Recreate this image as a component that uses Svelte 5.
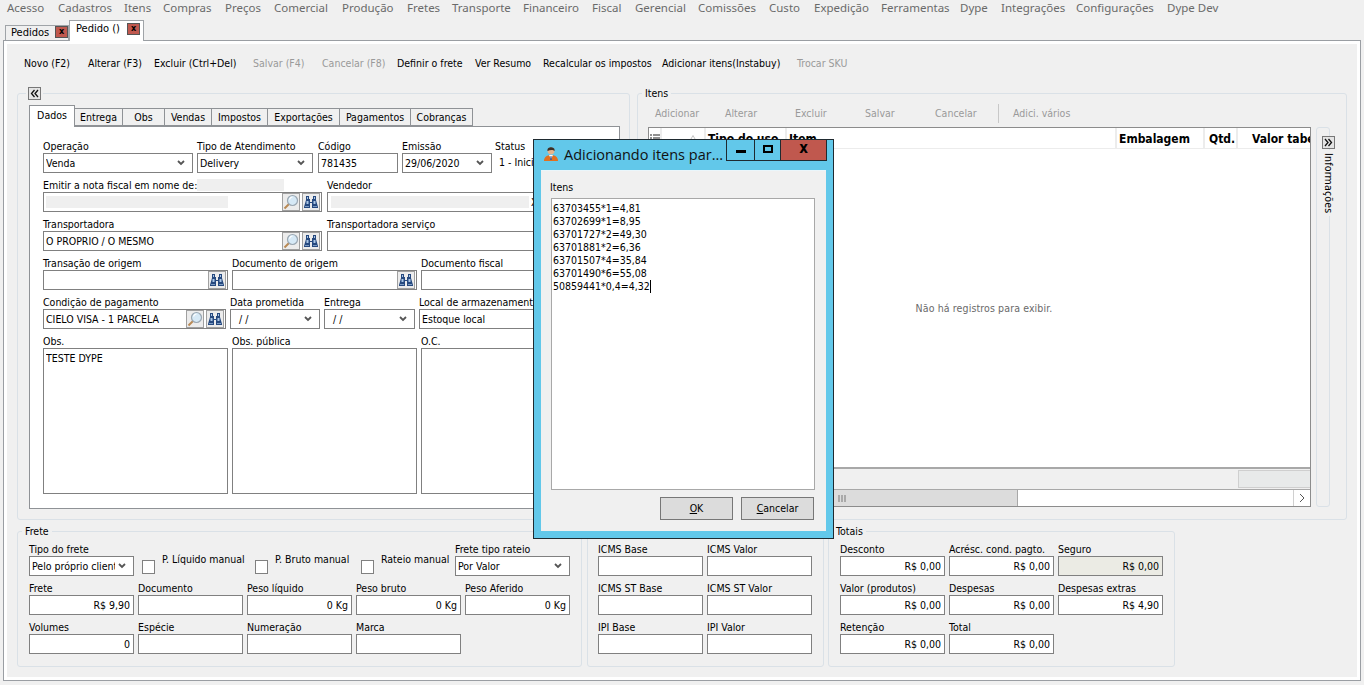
<script>
	const menu = ['Acesso', 'Cadastros', 'Itens', 'Compras', 'Preços', 'Comercial', 'Produção', 'Fretes', 'Transporte', 'Financeiro', 'Fiscal', 'Gerencial', 'Comissões', 'Custo', 'Expedição', 'Ferramentas', 'Dype', 'Integrações', 'Configurações', 'Dype Dev'];
	const menuX = [7, 58, 124, 163, 225, 274, 342, 407, 452, 523, 592, 635, 698, 769, 814, 881, 960, 1001, 1076, 1167, 1230];

	const toolbar = [
		{ text: 'Novo (F2)', w: 64 },
		{ text: 'Alterar (F3)', w: 66 },
		{ text: 'Excluir (Ctrl+Del)', w: 99 },
		{ text: 'Salvar (F4)', w: 69, off: true },
		{ text: 'Cancelar (F8)', w: 75, off: true },
		{ text: 'Definir o frete', w: 78 },
		{ text: 'Ver Resumo', w: 68 },
		{ text: 'Recalcular os impostos', w: 119 },
		{ text: 'Adicionar itens(Instabuy)', w: 135 },
		{ text: 'Trocar SKU', w: 70, off: true }
	];

	const pageTabs = [
		{ text: 'Entrega', w: 48 },
		{ text: 'Obs', w: 42 },
		{ text: 'Vendas', w: 47 },
		{ text: 'Impostos', w: 56 },
		{ text: 'Exportações', w: 72 },
		{ text: 'Pagamentos', w: 71 },
		{ text: 'Cobranças', w: 62 }
	];

	const dados = [
		[
			{ label: 'Operação', x: 43, w: 150, kind: 'select', value: 'Venda' },
			{ label: 'Tipo de Atendimento', x: 197, w: 116, kind: 'select', value: 'Delivery' },
			{ label: 'Código', x: 318, w: 80, value: '781435' },
			{ label: 'Emissão', x: 402, w: 90, kind: 'select', value: '29/06/2020' },
			{ label: 'Status', x: 495, w: 70, kind: 'plain', value: '1 - Inicial' }
		],
		[
			{ label: 'Emitir a nota fiscal em nome de:', x: 43, w: 279, kind: 'lookup', redacted: true, labelBlock: true },
			{ label: 'Vendedor', x: 327, w: 270, kind: 'masked' }
		],
		[
			{ label: 'Transportadora', x: 43, w: 279, kind: 'lookup', value: 'O PROPRIO / O MESMO' },
			{ label: 'Transportadora serviço', x: 327, w: 270 }
		],
		[
			{ label: 'Transação de origem', x: 43, w: 185, kind: 'find' },
			{ label: 'Documento de origem', x: 232, w: 185, kind: 'find' },
			{ label: 'Documento fiscal', x: 421, w: 176 }
		],
		[
			{ label: 'Condição de pagamento', x: 43, w: 183, kind: 'lookup', value: 'CIELO VISA - 1 PARCELA' },
			{ label: 'Data prometida', x: 230, w: 90, kind: 'select', value: '\u00a0\u00a0/\u00a0/' },
			{ label: 'Entrega', x: 324, w: 91, kind: 'select', value: '\u00a0\u00a0/\u00a0/' },
			{ label: 'Local de armazenamento', x: 419, w: 178, value: 'Estoque local' }
		],
		[
			{ label: 'Obs.', x: 43, w: 185, h: 146, value: 'TESTE DYPE', multi: true },
			{ label: 'Obs. pública', x: 232, w: 185, h: 146 },
			{ label: 'O.C.', x: 421, w: 176, h: 146 }
		]
	];

	const frete = [
		[
			{ label: 'Tipo do frete', x: 29, w: 105, kind: 'select', value: 'Pelo próprio client' },
			{ label: 'P. Líquido manual', x: 142, w: 108, kind: 'check' },
			{ label: 'P. Bruto manual', x: 255, w: 100, kind: 'check', pad: 7 },
			{ label: 'Rateio manual', x: 361, w: 90, kind: 'check' },
			{ label: 'Frete tipo rateio', x: 455, w: 115, kind: 'select', value: 'Por Valor' }
		],
		[
			{ label: 'Frete', x: 29, w: 105, value: 'R$ 9,90', right: true },
			{ label: 'Documento', x: 138, w: 105 },
			{ label: 'Peso líquido', x: 247, w: 105, value: '0 Kg', right: true },
			{ label: 'Peso bruto', x: 356, w: 105, value: '0 Kg', right: true },
			{ label: 'Peso Aferido', x: 465, w: 105, value: '0 Kg', right: true }
		],
		[
			{ label: 'Volumes', x: 29, w: 105, value: '0', right: true },
			{ label: 'Espécie', x: 138, w: 105 },
			{ label: 'Numeração', x: 247, w: 105 },
			{ label: 'Marca', x: 356, w: 105 }
		]
	];

	const impostos = [
		[{ label: 'ICMS Base', x: 598, w: 105 }, { label: 'ICMS Valor', x: 707, w: 105 }],
		[{ label: 'ICMS ST Base', x: 598, w: 105 }, { label: 'ICMS ST Valor', x: 707, w: 105 }],
		[{ label: 'IPI Base', x: 598, w: 105 }, { label: 'IPI Valor', x: 707, w: 105 }]
	];

	const totais = [
		[
			{ label: 'Desconto', x: 840, w: 105, value: 'R$ 0,00', right: true },
			{ label: 'Acrésc. cond. pagto.', x: 949, w: 105, value: 'R$ 0,00', right: true },
			{ label: 'Seguro', x: 1058, w: 105, value: 'R$ 0,00', right: true, readonly: true }
		],
		[
			{ label: 'Valor (produtos)', x: 840, w: 105, value: 'R$ 0,00', right: true },
			{ label: 'Despesas', x: 949, w: 105, value: 'R$ 0,00', right: true },
			{ label: 'Despesas extras', x: 1058, w: 105, value: 'R$ 4,90', right: true }
		],
		[
			{ label: 'Retenção', x: 840, w: 105, value: 'R$ 0,00', right: true },
			{ label: 'Total', x: 949, w: 105, value: 'R$ 0,00', right: true }
		]
	];

	const itensBar = [
		{ text: 'Adicionar', w: 70 },
		{ text: 'Alterar', w: 70 },
		{ text: 'Excluir', w: 70 },
		{ text: 'Salvar', w: 70 },
		{ text: 'Cancelar', w: 63 }
	];

	const columns = [
		{ text: 'Tipo do uso', w: 81 },
		{ text: 'Item', w: 330 },
		{ text: 'Embalagem', w: 88 },
		{ text: 'Qtd.', w: 33, pad: 4 },
		{ text: 'Valor tabela', w: 72, pad: 14, last: true }
	];

	const linhas = ['63703455*1=4,81', '63702699*1=8,95', '63701727*2=49,30', '63701881*2=6,36', '63701507*4=35,84', '63701490*6=55,08'];

	// left margin of a field, from the x of the previous one in the row
	function gap(row, i, start) {
		return i === 0 ? row[0].x - start : row[i].x - row[i - 1].x - row[i - 1].w;
	}
</script>

{#snippet magnifier()}
	<svg viewBox="0 0 16 16" width="16" height="16">
		<path d="M1.5 14.500 6 10" stroke="#b98a55" stroke-width="2" />
		<circle cx="9.500" cy="6.500" r="5" fill="#d6e9f6" stroke="#9aa7b2" stroke-width="1.2" />
		<path d="M6.500 5.500a3.500 3.500 0 0 1 3-2.500" stroke="#fff" stroke-width="1.2" fill="none" />
	</svg>
{/snippet}

{#snippet binoculars()}
	<svg viewBox="0 0 16 16" width="16" height="16">
		<path d="M3 2h3v3h1v3H9V5h1V2h3v4l2 7v1H9V9H7v5H1v-1l2-7z" fill="#26497f" />
		<path d="M3.500 7h2v3h-2zM10.500 7h2v3h-2zM4 3h1v2H4zM11 3h1v2h-1z" fill="#a9c6e6" />
		<path d="M2 12h4v1H2zM10 12h4v1h-4z" fill="#7c9cc4" />
	</svg>
{/snippet}

{#snippet chevron()}
	<svg class="chev" viewBox="0 0 8 6" width="8" height="6">
		<path d="M1 1 4 4 7 1" fill="none" stroke="#555" stroke-width="1.8" />
	</svg>
{/snippet}

{#snippet field(f, margin)}
	<div class="field" style="margin-left:{margin}px;width:{f.w}px">
		{#if f.kind === 'check'}
			<div class="check">
				<span class="box"></span>
				<span class="check-label" style="margin-left:{f.pad ?? 7}px">{f.label}</span>
			</div>
		{:else}
			<div class="label">
				{f.label}
				{#if f.labelBlock}<span class="label-block"></span>{/if}
			</div>
			{#if f.kind === 'plain'}
				<div class="plain">{f.value}</div>
			{:else}
				<div class="input" class:right={f.right} class:multi={f.multi} class:readonly={f.readonly} style="height:{f.h ?? 20}px">
					{#if f.redacted}<span class="redact wide"></span>{/if}
					{#if f.kind === 'masked'}<span class="redact long"></span><span class="x">X</span>{/if}
					<span class="value">{f.value ?? ''}</span>
					{#if f.kind === 'select'}{@render chevron()}{/if}
					{#if f.kind === 'lookup'}<span class="icon-btn">{@render magnifier()}</span>{/if}
					{#if f.kind === 'lookup' || f.kind === 'find'}<span class="icon-btn">{@render binoculars()}</span>{/if}
				</div>
			{/if}
		{/if}
	</div>
{/snippet}

{#snippet rows(list, start)}
	{#each list as row}
		<div class="row">
			{#each row as f, i}
				{@render field(f, gap(row, i, start))}
			{/each}
		</div>
	{/each}
{/snippet}

<div class="app">
	<nav class="menu">
		{#each menu as item, i}
			<span style="width:{menuX[i + 1] - menuX[i]}px">{item}</span>
		{/each}
	</nav>

	<div class="doc-tabs">
		<div class="doc-tab">Pedidos <span class="close">x</span></div>
		<div class="doc-tab active">Pedido () <span class="close">x</span></div>
	</div>

	<div class="doc">
		<div class="toolbar">
			{#each toolbar as b}
				<span class:off={b.off} style="width:{b.w}px">{b.text}</span>
			{/each}
		</div>

		<div class="upper">
			<fieldset class="group dados">
				<legend class="collapse-legend">
					<span class="mini-btn">
						<svg viewBox="0 0 11 11" width="11" height="11"><path d="M5.500 2 2.500 5.500 5.500 9M9 2 6 5.500 9 9" fill="none" stroke="#111" stroke-width="1.3" /></svg>
					</span>
				</legend>
				<div class="page-tabs">
					<div class="page-tab active">Dados</div>
					{#each pageTabs as t}
						<div class="page-tab" style="width:{t.w}px">{t.text}</div>
					{/each}
				</div>
				<div class="page">
					{@render rows(dados, 30)}
				</div>
			</fieldset>

			<fieldset class="group itens">
				<legend>Itens</legend>
				<div class="itens-bar">
					{#each itensBar as b}
						<span style="width:{b.w}px">{b.text}</span>
					{/each}
					<i class="sep"></i>
					<span>Adici. vários</span>
				</div>
				<div class="itens-main">
					<div class="grid">
						<div class="grid-head">
							<div class="cell menu-cell">
								<svg viewBox="0 0 10 8" width="10" height="8"><path d="M0 1h2M0 4h2M0 7h2M3 1h7M3 4h7M3 7h7" stroke="#222" stroke-width="1" /></svg>
							</div>
							<div class="cell sort-cell">
								<svg viewBox="0 0 8 7" width="8" height="7"><path d="M4 .5.5 6.500h7z" fill="none" stroke="#c4c4c4" /></svg>
							</div>
							{#each columns as c}
								<div class="cell" class:last={c.last} style="width:{c.w}px;padding-left:{c.pad ?? 2}px">{c.text}</div>
							{/each}
						</div>
						<div class="grid-body">Não há registros para exibir.</div>
						<div class="grid-foot"><span class="foot-cell"></span></div>
						<div class="scroll">
							<div class="thumb">
								<svg viewBox="0 0 8 7" width="8" height="7"><path d="M1 0v7M4 0v7M7 0v7" stroke="#777" /></svg>
							</div>
							<div class="arrow">
								<svg viewBox="0 0 6 10" width="6" height="10"><path d="M1 1l4 4-4 4" fill="none" stroke="#555" /></svg>
							</div>
						</div>
					</div>
					<div class="info">
						<span class="mini-btn info-btn">
							<svg viewBox="0 0 11 11" width="11" height="11"><path d="M2 2l3 3.500L2 9M5.500 2l3 3.500-3 3.500" fill="none" stroke="#111" stroke-width="1.3" /></svg>
						</span>
						<span class="info-text">Informações</span>
					</div>
				</div>
			</fieldset>
		</div>

		<div class="bottom">
			<fieldset class="group frete">
				<legend>Frete</legend>
				<div class="stack">{@render rows(frete, 29)}</div>
			</fieldset>
			<fieldset class="group impostos">
				<legend>&nbsp;</legend>
				<div class="stack">{@render rows(impostos, 598)}</div>
			</fieldset>
			<fieldset class="group totais">
				<legend>Totais</legend>
				<div class="stack">{@render rows(totais, 840)}</div>
			</fieldset>
		</div>
	</div>

	<div class="dialog">
		<div class="dialog-title">
			<svg class="user" viewBox="0 0 16 16" width="16" height="16">
				<path d="M1 15c0-4 3-6 7-6s7 2 7 6z" fill="#e2701f" />
				<path d="M6 9h4L8 13z" fill="#fff" />
				<path d="M7.500 10h1l.3 4h-1.600z" fill="#2a5ca8" />
				<circle cx="8" cy="5" r="3.400" fill="#e6b48c" />
				<path d="M4.500 5C4 1.500 7 1 8.500 1.200 11 1.500 12 3 11.500 5 10.500 3.500 7 3.500 4.500 5z" fill="#3a3028" />
			</svg>
			<span class="dialog-name">Adicionando itens par...</span>
			<div class="caption">
				<span class="cap min"><i></i></span>
				<span class="cap max"><i></i></span>
				<span class="cap shut">x</span>
			</div>
		</div>
		<div class="dialog-client">
			<div class="dialog-label">Itens</div>
			<div class="memo">
				{#each linhas as l}
					<div>{l}</div>
				{/each}
				<div>50859441*0,4=4,32<span class="caret"></span></div>
			</div>
			<div class="dialog-buttons">
				<span class="push"><u>O</u>K</span>
				<span class="push"><u>C</u>ancelar</span>
			</div>
		</div>
	</div>
</div>

<style>
	:global(body) {
		background: #f0f0f0;
	}
	.app {
		position: relative;
		width: 1364px;
		height: 685px;
		overflow: hidden;
		background: #f0f0f0;
		font-family: 'DejaVu Sans Condensed', 'Liberation Sans', sans-serif;
		font-size: 10.5px;
		line-height: 13px;
		color: #000;
	}

	.menu {
		display: flex;
		height: 20px;
		padding-left: 7px;
		align-items: center;
		padding-bottom: 6px;
		box-sizing: border-box;
		font-family: 'Noto Sans', sans-serif;
		font-size: 11.5px;
		color: #6a6a6a;
		white-space: nowrap;
	}
	.menu span {
		flex: none;
	}

	.doc-tabs {
		display: flex;
		height: 20px;
		padding-left: 5px;
		align-items: flex-end;
		position: relative;
		z-index: 1;
	}
	.doc-tab {
		display: flex;
		align-items: center;
		justify-content: space-between;
		box-sizing: border-box;
		width: 64px;
		height: 15px;
		padding: 0 0 2px 5px;
		border: 1px solid #a0a4a8;
		border-bottom: none;
		font-size: 11px;
		white-space: nowrap;
	}
	.doc-tab.active {
		width: 75px;
		height: 21px;
		margin-bottom: -1px;
		padding: 0 3px 5px 6px;
		background: #fff;
	}
	.close {
		box-sizing: border-box;
		flex: none;
		width: 13px;
		height: 12px;
		border: 1px solid #555;
		background: #c0584e;
		font-size: 9px;
		font-weight: bold;
		line-height: 9px;
		text-align: center;
	}

	.doc {
		box-sizing: border-box;
		width: 1358px;
		height: 641px;
		margin-left: 3px;
		border: 1px solid #9a9ea3;
		outline: 3px solid #fff;
		outline-offset: -4px;
		padding: 4px 3px;
	}

	.toolbar {
		display: flex;
		height: 42px;
		padding: 12px 0 0 17px;
		box-sizing: border-box;
		white-space: nowrap;
	}
	.toolbar span {
		flex: none;
	}
	.off {
		color: #9a9a9a;
	}

	fieldset.group {
		margin: 0;
		padding: 0;
		min-width: 0;
		box-sizing: border-box;
		border: 1px solid #dae1e7;
		border-radius: 3px;
	}
	legend {
		margin-left: 4px;
		padding: 0 3px;
	}
	.upper {
		display: flex;
		gap: 7px;
		margin-left: 10px;
		height: 433px;
	}
	.dados {
		width: 613px;
		padding-left: 11px !important;
	}
	.collapse-legend {
		margin-left: -3px;
		padding: 0 2px;
		height: 13px;
	}
	.mini-btn {
		display: block;
		box-sizing: border-box;
		width: 13px;
		height: 13px;
		border: 1px solid #777;
		background: #e4e4e4;
	}
	.mini-btn svg {
		display: block;
	}

	.page-tabs {
		display: flex;
		align-items: flex-end;
		height: 20px;
		margin-top: 6px;
		position: relative;
		z-index: 1;
	}
	.page-tab {
		box-sizing: border-box;
		height: 18px;
		border: 1px solid #8f9296;
		border-left: none;
		line-height: 17px;
		text-align: center;
	}
	.page-tab.active {
		width: 46px;
		height: 22px;
		margin-bottom: -1px;
		padding-bottom: 3px;
		border-left: 1px solid #8f9296;
		border-bottom: none;
		background: #fff;
		line-height: 19px;
	}
	.page {
		box-sizing: border-box;
		width: 591px;
		height: 383px;
		padding-top: 13px;
		border: 1px solid #8f9296;
		background: #fff;
		display: flex;
		flex-direction: column;
		gap: 6px;
	}

	.row {
		display: flex;
		align-items: flex-start;
	}
	.field {
		flex: none;
		min-width: 0;
	}
	.label {
		position: relative;
		height: 13px;
		white-space: nowrap;
	}
	.label-block {
		position: absolute;
		left: 154px;
		top: 0;
		width: 87px;
		height: 12px;
		background: #efefef;
	}
	.input {
		display: flex;
		align-items: center;
		gap: 2px;
		box-sizing: border-box;
		padding: 0 1px 0 2px;
		border: 1px solid #808080;
		background: #fff;
		white-space: nowrap;
		overflow: hidden;
	}
	.input .value {
		flex: 1;
		min-width: 0;
		overflow: hidden;
	}
	.input.right .value {
		text-align: right;
		padding-right: 2px;
	}
	.input.multi {
		align-items: flex-start;
		padding-top: 3px;
	}
	.input.readonly {
		background: #ebebe4;
	}
	.chev {
		flex: none;
		margin: 0 6px 0 1px;
	}
	.icon-btn {
		flex: none;
		display: flex;
		align-items: center;
		justify-content: center;
		box-sizing: border-box;
		width: 18px;
		height: 18px;
		border: 1px solid #a0a0a0;
		background: #ececec;
	}
	.redact {
		flex: none;
		height: 12px;
		background: #efefef;
	}
	.redact.wide {
		width: 182px;
	}
	.redact.long {
		width: 198px;
		margin-left: 1px;
	}
	.input .x {
		flex: none;
		width: 6px;
	}
	.plain {
		height: 20px;
		padding-left: 4px;
		line-height: 19px;
		white-space: nowrap;
	}
	.check {
		position: relative;
		height: 33px;
		display: flex;
		align-items: flex-start;
		white-space: nowrap;
	}
	.box {
		flex: none;
		box-sizing: border-box;
		width: 13px;
		height: 14px;
		margin-top: 17px;
		border: 1px solid #808080;
		background: #fff;
	}
	.check-label {
		margin-top: 10px;
	}

	.itens {
		width: 710px;
	}
	.itens-bar {
		display: flex;
		align-items: center;
		height: 14px;
		margin: 6px 0 7px 17px;
		color: #9a9a9a;
		white-space: nowrap;
	}
	.itens-bar span {
		flex: none;
	}
	.sep {
		width: 1px;
		height: 19px;
		margin-right: 14px;
		background: #c8c8c8;
	}
	.itens-main {
		display: flex;
		margin-left: 10px;
		height: 380px;
	}
	.grid {
		display: flex;
		flex-direction: column;
		box-sizing: border-box;
		flex: none;
		width: 663px;
		border: 1px solid #8c8c8c;
		background: #fff;
		position: relative;
		z-index: 1;
	}
	.grid-head {
		display: flex;
		height: 21px;
		flex: none;
		font-size: 12px;
		font-weight: bold;
		overflow: hidden;
	}
	.cell {
		flex: none;
		box-sizing: border-box;
		padding-left: 2px;
		border-right: 2px solid #ececec;
		border-bottom: 1px solid #ececec;
		line-height: 23px;
		white-space: nowrap;
		overflow: hidden;
	}
	.cell.last {
		border-right: none;
	}
	.menu-cell {
		width: 13px;
		display: flex;
		align-items: center;
		padding-left: 1px;
	}
	.sort-cell {
		width: 44px;
		display: flex;
		align-items: center;
		justify-content: flex-end;
		padding-right: 7px;
	}
	.grid-body {
		flex: 1;
		display: flex;
		align-items: center;
		justify-content: center;
		padding-left: 9px;
		letter-spacing: 0.12px;
		color: #6a6a6a;
	}
	.grid-foot {
		flex: none;
		display: flex;
		justify-content: flex-end;
		align-items: center;
		height: 22px;
		border-top: 2px solid #a8a8a8;
		box-sizing: border-box;
		background: #f0f0f0;
	}
	.foot-cell {
		width: 72px;
		height: 18px;
		background: #e8eaea;
		border: 1px solid #cfcfcf;
		border-right: none;
		box-sizing: border-box;
	}
	.scroll {
		flex: none;
		display: flex;
		height: 17px;
		border-top: 1px solid #a8a8a8;
		box-sizing: border-box;
	}
	.thumb {
		flex: none;
		width: 369px;
		background: #dcdcdc;
		border-right: 1px solid #a8a8a8;
		display: flex;
		align-items: center;
		padding-left: 189px;
		box-sizing: border-box;
	}
	.arrow {
		margin-left: auto;
		width: 17px;
		display: flex;
		align-items: center;
		justify-content: center;
		border-left: 1px solid #d0d0d0;
		box-sizing: border-box;
	}
	.info {
		position: relative;
		flex: none;
		box-sizing: border-box;
		width: 14px;
		height: 380px;
		margin-left: 5px;
		border: 1px solid #dae1e7;
		border-radius: 3px;
	}
	.info-btn {
		position: absolute;
		left: 5px;
		top: 8px;
	}
	.info-text {
		position: absolute;
		left: 5px;
		top: 22px;
		padding: 3px 0;
		width: 14px;
		background: #f0f0f0;
		writing-mode: vertical-rl;
		line-height: 14px;
		letter-spacing: 0.2px;
		white-space: nowrap;
	}

	.bottom {
		display: flex;
		margin: 5px 0 0 10px;
		height: 142px;
	}
	.stack {
		display: flex;
		flex-direction: column;
		gap: 6px;
		margin-top: 5px;
	}
	.frete {
		width: 565px;
		padding-left: 11px !important;
	}
	.impostos {
		width: 237px;
		margin-left: 5px !important;
		padding-left: 10px !important;
	}
	.totais {
		width: 347px;
		margin-left: 4px !important;
		padding-left: 11px !important;
	}
	.frete legend,
	.impostos legend,
	.totais legend {
		margin-left: -7px;
	}

	.dialog {
		position: absolute;
		left: 533px;
		top: 139px;
		z-index: 5;
		box-sizing: border-box;
		width: 301px;
		height: 400px;
		border: 1px solid #1f2a30;
		background: #62c8ea;
		padding: 0 7px 7px;
		display: flex;
		flex-direction: column;
	}
	.dialog-title {
		flex: none;
		display: flex;
		align-items: flex-start;
		height: 30px;
	}
	.user {
		flex: none;
		margin: 6px 5px 0 2px;
	}
	.dialog-name {
		margin-top: 6px;
		font-family: 'Open Sans', sans-serif;
		font-size: 14.5px;
		line-height: 18px;
		color: #111;
		white-space: nowrap;
	}
	.caption {
		margin-left: auto;
		margin-right: -1px;
		display: flex;
		height: 21px;
		border: 1px solid #1f2a30;
		border-top: none;
		box-sizing: border-box;
	}
	.cap {
		display: flex;
		align-items: center;
		justify-content: center;
		box-sizing: border-box;
		border-right: 1px solid #1f2a30;
	}
	.cap.min {
		width: 28px;
	}
	.cap.min i {
		width: 10px;
		height: 3px;
		margin-top: 3px;
		background: #000;
	}
	.cap.max {
		width: 26px;
	}
	.cap.max i {
		box-sizing: border-box;
		width: 10px;
		height: 8px;
		border: 2px solid #000;
		margin-bottom: 2px;
	}
	.cap.shut {
		width: 45px;
		border-right: none;
		background: #c0584e;
		font-size: 15px;
		font-weight: bold;
		padding-bottom: 3px;
	}
	.dialog-client {
		flex: 1;
		box-sizing: border-box;
		padding: 10px 10px 0 9px;
		background: #f0f0f0;
		border-top: 1px solid #eaf6fb;
	}
	.dialog-label {
		height: 13px;
		margin-bottom: 4px;
	}
	.memo {
		box-sizing: border-box;
		width: 264px;
		height: 292px;
		margin-left: 1px;
		padding: 3px 0 0 1px;
		border: 1px solid #a8a8a8;
		background: #fff;
	}
	.caret {
		display: inline-block;
		width: 1px;
		height: 13px;
		vertical-align: top;
		background: #000;
	}
	.dialog-buttons {
		display: flex;
		justify-content: flex-end;
		gap: 8px;
		margin: 7px 2px 0 0;
	}
	.push {
		box-sizing: border-box;
		width: 73px;
		height: 23px;
		border: 1px solid #777;
		background: #dcdcdc;
		line-height: 21px;
		text-align: center;
	}
</style>
